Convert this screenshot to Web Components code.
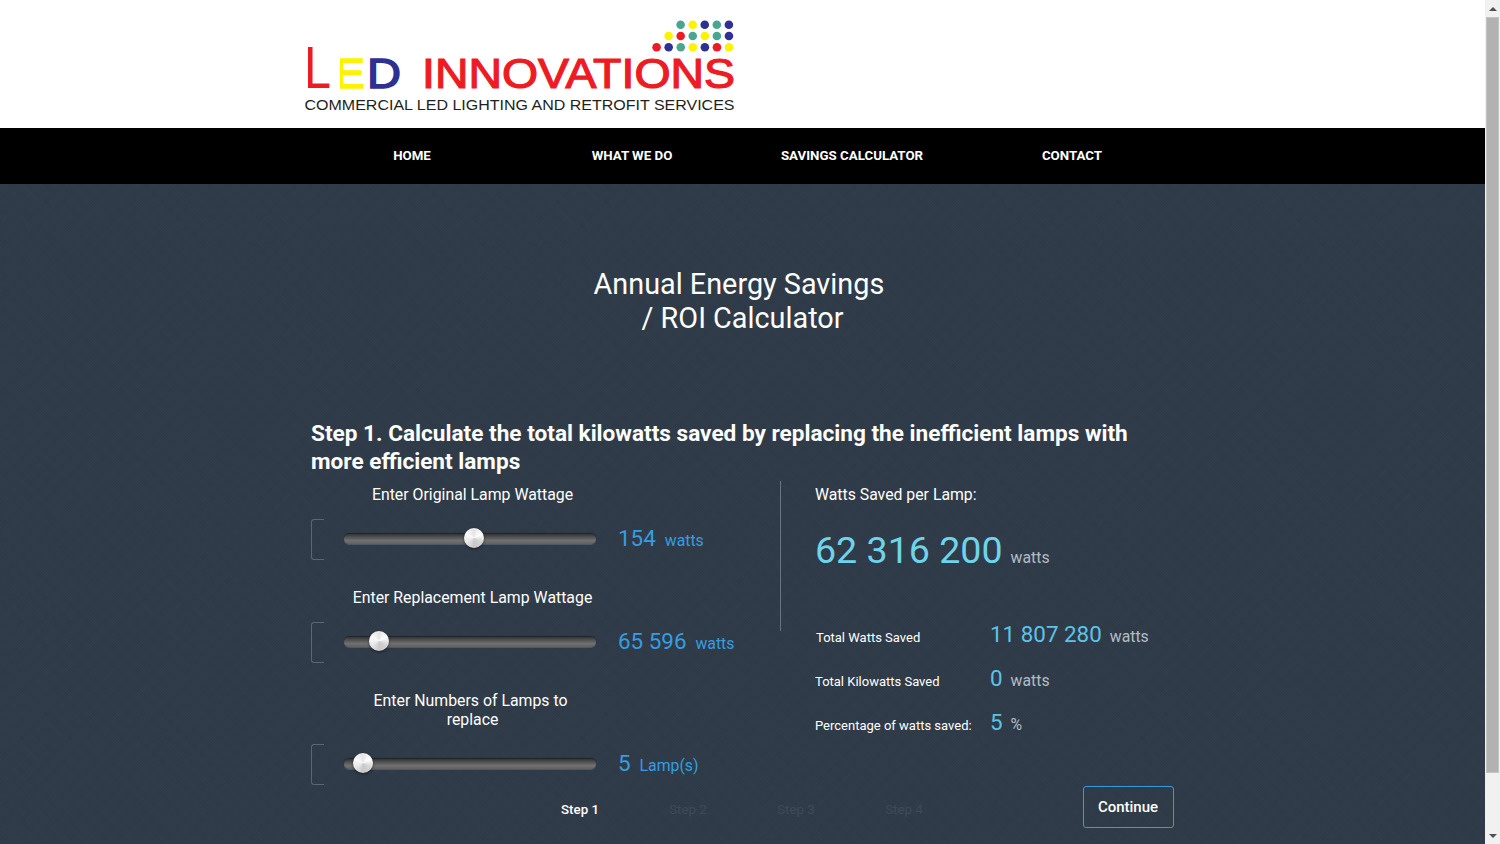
<!DOCTYPE html>
<html>
<head>
<meta charset="utf-8">
<title>LED Innovations</title>
<style>
	html, body { margin: 0; height: 100%; overflow: hidden; }
	body { display: flex; font-family: Roboto, "Liberation Sans", sans-serif; color: #fff; background: #2f3a47; }
	.page { flex: 1; min-width: 0; height: 844px; display: flex; flex-direction: column; }
</style>
</head>
<body>
<div class="page">
	<led-header></led-header>
	<main-nav>
		<nav-item>HOME</nav-item>
		<nav-item>WHAT WE DO</nav-item>
		<nav-item>SAVINGS CALCULATOR</nav-item>
		<nav-item>CONTACT</nav-item>
	</main-nav>
	<calc-page>
		<lamp-slider slot="left" pos="130" value="154" unit="watts">Enter Original Lamp Wattage</lamp-slider>
		<lamp-slider slot="left" pos="34.5" value="65 596" unit="watts">Enter Replacement Lamp Wattage</lamp-slider>
		<lamp-slider slot="left" pos="19" value="5" unit="Lamp(s)">Enter Numbers of Lamps to&nbsp;<br>replace</lamp-slider>
		<result-row slot="right" value="11 807 280" unit="watts" inset="1">Total Watts Saved</result-row>
		<result-row slot="right" value="0" unit="watts">Total Kilowatts Saved</result-row>
		<result-row slot="right" value="5" unit="%">Percentage of watts saved:</result-row>
	</calc-page>
</div>
<fake-scrollbar></fake-scrollbar>

<template id="header-tpl">
	<style>
		:host { display: block; height: 128px; background: #fff; flex: none; }
		.wrap { width: 880px; margin: 0 auto; }
		svg { display: block; }
		text { font-family: "Liberation Sans", Arial, sans-serif; }
	</style>
	<div class="wrap">
		<svg width="440" height="128" viewBox="302 0 440 128">
			<g id="dots"></g>
			<text x="303" y="88" font-size="60" fill="#ed1c24" textLength="27" lengthAdjust="spacingAndGlyphs">L</text>
			<text x="334" y="88" font-size="42" fill="#fff200" stroke="#fff200" stroke-width="1.500" textLength="30" lengthAdjust="spacingAndGlyphs">E</text>
			<rect x="334" y="56" width="5" height="34" fill="#fff"/>
			<text x="366" y="88" font-size="42" fill="#2e3192" stroke="#2e3192" stroke-width="1.500" textLength="34" lengthAdjust="spacingAndGlyphs">D</text>
			<text x="421" y="88" font-size="42" fill="#ed1c24" stroke="#ed1c24" stroke-width="1.200" textLength="313" lengthAdjust="spacingAndGlyphs">INNOVATIONS</text>
			<text x="303.500" y="110" font-size="15" fill="#231f20" textLength="430" lengthAdjust="spacingAndGlyphs">COMMERCIAL LED LIGHTING AND RETROFIT SERVICES</text>
		</svg>
	</div>
</template>

<template id="nav-tpl">
	<style>
		:host { display: flex; justify-content: center; height: 56px; padding-right: 1px; background: #000; flex: none; }
	</style>
	<slot></slot>
</template>

<template id="nav-item-tpl">
	<style>
		:host { display: flex; align-items: center; justify-content: center; width: 220px; padding-bottom: 2px; box-sizing: border-box; font-size: 13.3px; font-weight: 700; color: #fff; }
	</style>
	<slot></slot>
</template>

<template id="calc-tpl">
	<style>
		:host {
			display: block; flex: 1; min-height: 0; overflow: hidden;
			background-color: #303b49;
			background-image:
				repeating-linear-gradient(45deg, rgba(255,255,255,.012) 0 1px, transparent 1px 2px),
				repeating-linear-gradient(-45deg, rgba(0,0,0,.035) 0 1px, transparent 1px 2px);
		}
		.inner { width: 863px; margin: 0 auto; }
		h1 { margin: 0; padding-top: 83px; font-size: 28.8px; line-height: 34px; font-weight: 400; text-align: center; }
		h2 { margin: 85px 0 0; font-size: 22.6px; line-height: 28px; font-weight: 700; }
		.cols { display: grid; grid-template-columns: 469px 1fr; margin-top: 5px; height: 305px; }
		.left { display: flex; flex-direction: column; gap: 28px; padding-top: 4px; }
		.saved { border-left: 1px solid #6a737e; height: 150px; padding-left: 34px; box-sizing: border-box; }
		.saved p { margin: 0; padding-top: 4px; font-size: 15.8px; line-height: 19px; }
		.big { display: flex; align-items: baseline; margin-top: 22px; color: #6fd3ea; font-size: 37.6px; line-height: 48px; }
		.big span { margin-left: 8px; font-size: 15.8px; color: #b4bcc4; }
		.rows { display: flex; flex-direction: column; gap: 16px; padding: 0 0 0 35px; margin-top: -11px; }
		.foot { display: flex; align-items: center; margin-top: 0; }
		.continue {
			margin-left: auto; width: 91px; height: 42px; box-sizing: border-box; padding: 0 1px 0 0;
			font: 500 15px Roboto, sans-serif; color: #fff; background: transparent;
			border: 1px solid #3a9ad9; border-radius: 3px;
		}
	</style>
	<div class="inner">
		<h1>Annual Energy Savings&nbsp;<br>/ ROI Calculator</h1>
		<h2>Step 1. Calculate the total kilowatts saved by replacing the inefficient lamps with more efficient lamps</h2>
		<div class="cols">
			<div class="left"><slot name="left"></slot></div>
			<div>
				<div class="saved">
					<p>Watts Saved per Lamp:</p>
					<div class="big">62 316 200 <span>watts</span></div>
				</div>
				<div class="rows"><slot name="right"></slot></div>
			</div>
		</div>
		<div class="foot">
			<step-tracker></step-tracker>
			<button class="continue">Continue</button>
		</div>
	</div>
</template>

<template id="slider-tpl">
	<style>
		:host { display: block; }
		.label { width: 323px; text-align: center; font-size: 15.85px; line-height: 19px; color: #fff; }
		.row { display: flex; align-items: center; height: 42px; margin-top: 14px; }
		.bracket {
			width: 13px; height: 41px; margin-top: 1px; flex: none; box-sizing: border-box;
			border: 1px solid #5b6672; border-right: 0; border-radius: 3px 0 0 3px;
		}
		.track {
			position: relative; width: 252px; height: 10px; margin: -1px 22px 0 20px; flex: none; border-radius: 5px;
			background: linear-gradient(#333 0, #4c4c4c 25%, #707070 65%, #626262 100%);
			box-shadow: 0 -1px 1px #20262e, 0 1px 0 #4a5a6a;
		}
		.thumb {
			position: absolute; top: 50%; left: var(--pos); width: 20px; height: 20px; margin: -10.5px 0 0 -10px; border-radius: 50%;
			background: conic-gradient(#e4e4e4, #fff 60deg, #d4d4d4 120deg, #c8c8c8 180deg, #e8e8e8 240deg, #fafafa 300deg, #e4e4e4);
			box-shadow: 0 1px 3px rgba(0,0,0,.5);
		}
		.value { display: flex; align-items: baseline; margin-top: -2px; color: #359de0; font-size: 22.4px; white-space: nowrap; }
		.value span { margin-left: 9px; font-size: 15.8px; }
	</style>
	<div class="label"><slot></slot></div>
	<div class="row">
		<div class="bracket"></div>
		<div class="track"><div class="thumb"></div></div>
		<div class="value"><b style="font-weight:400"></b><span></span></div>
	</div>
</template>

<template id="row-tpl">
	<style>
		:host { display: grid; grid-template-columns: 175px auto; align-items: baseline; height: 28px; font-size: 13px; }
		.value { color: #5cc4e6; font-size: 22.4px; line-height: 28px; }
		.unit { margin-left: 8px; font-size: 15.8px; color: #b4bcc4; }
	</style>
	<div class="name"><slot></slot></div>
	<div><span class="value"></span><span class="unit"></span></div>
</template>

<template id="steps-tpl">
	<style>
		:host { display: flex; margin-left: 215px; padding-top: 4px; font-size: 13.3px; }
		span { width: 108px; text-align: center; color: #3f4a57; }
		span.on { color: #fff; font-weight: 500; }
	</style>
	<span class="on">Step 1</span><span>Step 2</span><span>Step 3</span><span>Step 4</span>
</template>

<template id="scroll-tpl">
	<style>
		:host { display: flex; flex-direction: column; align-items: center; width: 15px; height: 844px; flex: none; background: #f1f1f1; }
		.btn { height: 17px; flex: none; display: flex; align-items: center; justify-content: center; }
		.up { border: 4px solid transparent; border-top: 0; border-bottom: 4px solid #505050; }
		.down { border: 4px solid transparent; border-bottom: 0; border-top: 4px solid #505050; }
		.thumb { width: 13px; height: 756px; flex: none; background: #b2b2b2; box-sizing: border-box; border: 1px solid #c4c4c4; }
		.rest { flex: 1; }
	</style>
	<div class="btn"><div class="up"></div></div>
	<div class="thumb"></div>
	<div class="rest"></div>
	<div class="btn"><div class="down"></div></div>
</template>

<script>
	function mount(el, id) {
		el.attachShadow({ mode: 'open' })
		el.shadowRoot.appendChild(document.getElementById(id).content.cloneNode(true))
	}

	class LedHeader extends HTMLElement {
		constructor() {
			super()
			mount(this, 'header-tpl')
			const t = '#4ba58f', y = '#fff200', n = '#2e3192', r = '#ed1c24'
			const rows = [
				[679.6, 24.700, [t, y, n, t, n]],
				[667.6, 36, [y, r, t, y, t, n]],
				[655.6, 47.300, [r, n, t, y, n, r, y]]
			]
			let dots = ''
			rows.forEach(([x, cy, colors]) => colors.forEach((c, i) => {
				dots += `<circle cx="${x + i * 12.07}" cy="${cy}" r="4.300" fill="${c}"/>`
			}))
			this.shadowRoot.getElementById('dots').innerHTML = dots
		}
	}

	class MainNav extends HTMLElement {
		constructor() { super(); mount(this, 'nav-tpl') }
	}

	class NavItem extends HTMLElement {
		constructor() { super(); mount(this, 'nav-item-tpl') }
	}

	class CalcPage extends HTMLElement {
		constructor() { super(); mount(this, 'calc-tpl') }
	}

	class LampSlider extends HTMLElement {
		constructor() { super(); mount(this, 'slider-tpl') }
		connectedCallback() {
			const s = this.shadowRoot
			s.querySelector('.thumb').style.setProperty('--pos', this.getAttribute('pos') + 'px')
			s.querySelector('.value b').textContent = this.getAttribute('value')
			s.querySelector('.value span').textContent = this.getAttribute('unit')
		}
	}

	class ResultRow extends HTMLElement {
		constructor() { super(); mount(this, 'row-tpl') }
		connectedCallback() {
			const s = this.shadowRoot
			s.querySelector('.value').textContent = this.getAttribute('value')
			s.querySelector('.unit').textContent = this.getAttribute('unit')
			if (this.hasAttribute('inset')) s.querySelector('.name').style.paddingLeft = '1px'
		}
	}

	class StepTracker extends HTMLElement {
		constructor() { super(); mount(this, 'steps-tpl') }
	}

	class FakeScrollbar extends HTMLElement {
		constructor() { super(); mount(this, 'scroll-tpl') }
	}

	customElements.define('step-tracker', StepTracker)
	customElements.define('led-header', LedHeader)
	customElements.define('main-nav', MainNav)
	customElements.define('nav-item', NavItem)
	customElements.define('calc-page', CalcPage)
	customElements.define('lamp-slider', LampSlider)
	customElements.define('result-row', ResultRow)
	customElements.define('fake-scrollbar', FakeScrollbar)
</script>
</body>
</html>
